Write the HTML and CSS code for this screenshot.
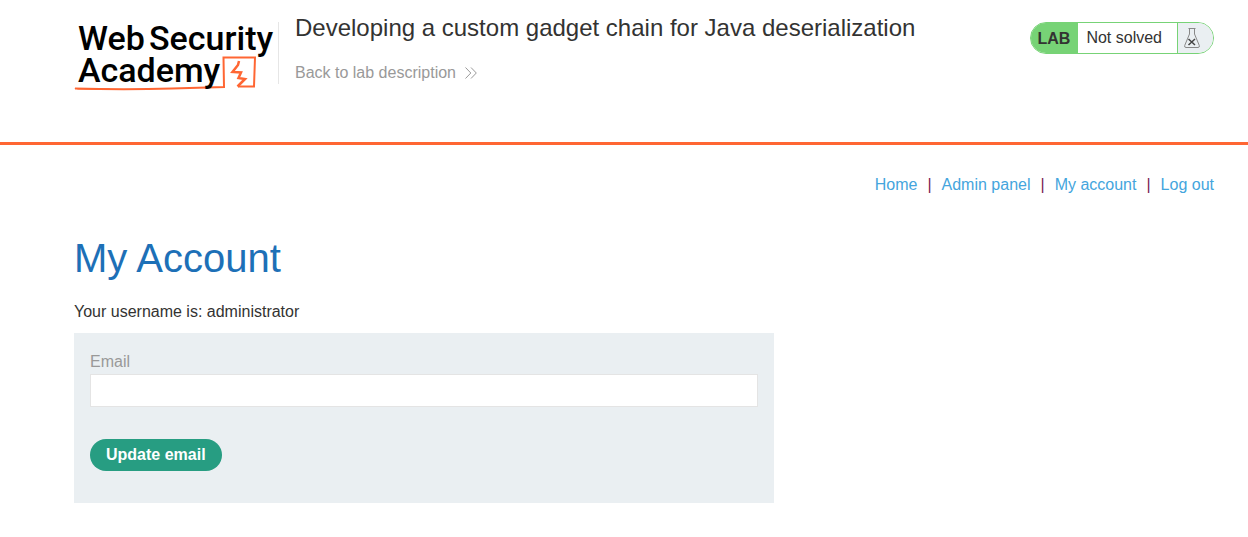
FILE: index.html
```html
<!DOCTYPE html>
<html lang="en">
<head>
<meta charset="utf-8">
<title>Developing a custom gadget chain for Java deserialization</title>
<link rel="stylesheet" href="styles.css">
</head>
<body>
<header class="lab-header">
  <div class="container header-row">
    <svg class="logo" width="204" height="72" viewBox="0 0 204 72" role="img" aria-label="Web Security Academy">
      <path d="M1 66.500Q50 68 98 66.500T150 65L149.500 35.500L181 35.500L180 64.500L164 64.500" fill="none" stroke="#ff6633" stroke-width="2"/>
      <path d="M165 39L164 43L158.500 50L167 50.500L164.500 56L171 57L163.500 64.500" fill="none" stroke="#ff6633" stroke-width="2.500"/>
      <path d="M0 66L36 66.500L36 68L4 67.500Z" fill="#ff6633"/>
      <g class="logo-text">
        <text x="4" y="28">Web</text>
        <text x="75" y="28">Security</text>
        <text x="4" y="60">Academy</text>
      </g>
    </svg>
    <div class="title-block">
      <h2 class="title">Developing a custom gadget chain for Java deserialization</h2>
      <a class="back-link" href="#">Back to lab description
        <svg width="12" height="12" viewBox="0 0 12 12" fill="none" stroke="#999" aria-hidden="true"><path d="M.5 .5L5.800 6L.5 11.500M6 .5L11.300 6L6 11.500"/></svg>
      </a>
    </div>
    <div class="lab-status">
      <span class="lab-tag">LAB</span>
      <span class="lab-state">Not solved</span>
      <span class="lab-icon">
        <svg width="16" height="20" viewBox="0 0 16 20" fill="none" aria-hidden="true"><path d="M4.500 .5H11.500M5.500 1V6L.7 17.500Q.2 19.500 2 19.500H14Q15.800 19.500 15.300 17.500L10.500 6V1" stroke="#888"/><path d="M4.500 11L11 17M11 11L4.500 17" stroke="#444" stroke-width="1.500"/></svg>
      </span>
    </div>
  </div>
</header>
<main class="container">
  <nav class="nav">
    <a href="#">Home</a><span>|</span><a href="#">Admin panel</a><span>|</span><a href="#">My account</a><span>|</span><a href="#">Log out</a>
  </nav>
  <h1 class="heading">My Account</h1>
  <p class="username">Your username is: administrator</p>
  <form class="panel">
    <label class="label" for="email">Email</label>
    <input class="input" id="email" type="email" name="email">
    <button class="button" type="submit">Update email</button>
  </form>
</main>
</body>
</html>
```
FILE: styles.css
```css
* {
  box-sizing: border-box;
}

body {
  margin: 0;
  background: #fff;
  color: #333332;
  font: 16px/20px "Liberation Sans", Arial, sans-serif;
}

.container {
  padding: 0 34px 0 74px;
}

.lab-header {
  padding: 14px 0 48px;
  border-bottom: 3px solid #ff6633;
}

.header-row {
  display: flex;
  align-items: flex-start;
}

.logo {
  flex: none;
  margin-top: 8px;
}

.logo-text {
  fill: #000;
  font: 500 34px Roboto, sans-serif;
}

.title-block {
  flex: 1;
  margin-top: 8px;
  padding-left: 16px;
  height: 62px;
  border-left: 1px solid #e6e6e6;
}

.title {
  margin: -8px 0 0;
  font-size: 24px;
  font-weight: 400;
  line-height: 28px;
}

.back-link {
  display: inline-flex;
  align-items: center;
  gap: 9px;
  margin-top: 21px;
  color: #999;
  text-decoration: none;
}

.lab-status {
  display: flex;
  height: 32px;
  margin-top: 8px;
  overflow: hidden;
  border: 1px solid #77d376;
  border-radius: 16px;
  line-height: 30px;
}

.lab-tag {
  padding: 1px 8px 0 7px;
  background: #77d376;
  font-weight: 700;
}

.lab-state {
  padding: 0 15px 0 8px;
}

.lab-icon {
  display: flex;
  align-items: center;
  width: 36px;
  padding-left: 6px;
  border-left: 1px solid #77d376;
  background: #eaeff2;
}

.nav {
  display: flex;
  justify-content: flex-end;
  gap: 10px;
  padding-top: 30px;
  color: #7a1a50;
}

.nav a {
  color: #44a5dd;
  text-decoration: none;
}

.heading {
  margin: 39px 0 0;
  color: #1d70b7;
  font-size: 40px;
  font-weight: 400;
  line-height: 48px;
}

.username {
  margin: 20px 0 11px;
}

.panel {
  max-width: 700px;
  padding: 19px 16px 32px;
  background: #eaeff2;
}

.label {
  display: block;
  margin-bottom: 2px;
  color: #999;
}

.input {
  display: block;
  width: 100%;
  height: 33px;
  padding: 0 8px;
  border: 1px solid #e4e4e4;
  background: #fff;
  font: inherit;
}

.button {
  display: block;
  height: 32px;
  margin-top: 32px;
  padding: 0 16px;
  border: 0;
  border-radius: 16px;
  background: #279d82;
  color: #fff;
  font: inherit;
  font-weight: 700;
}
```
